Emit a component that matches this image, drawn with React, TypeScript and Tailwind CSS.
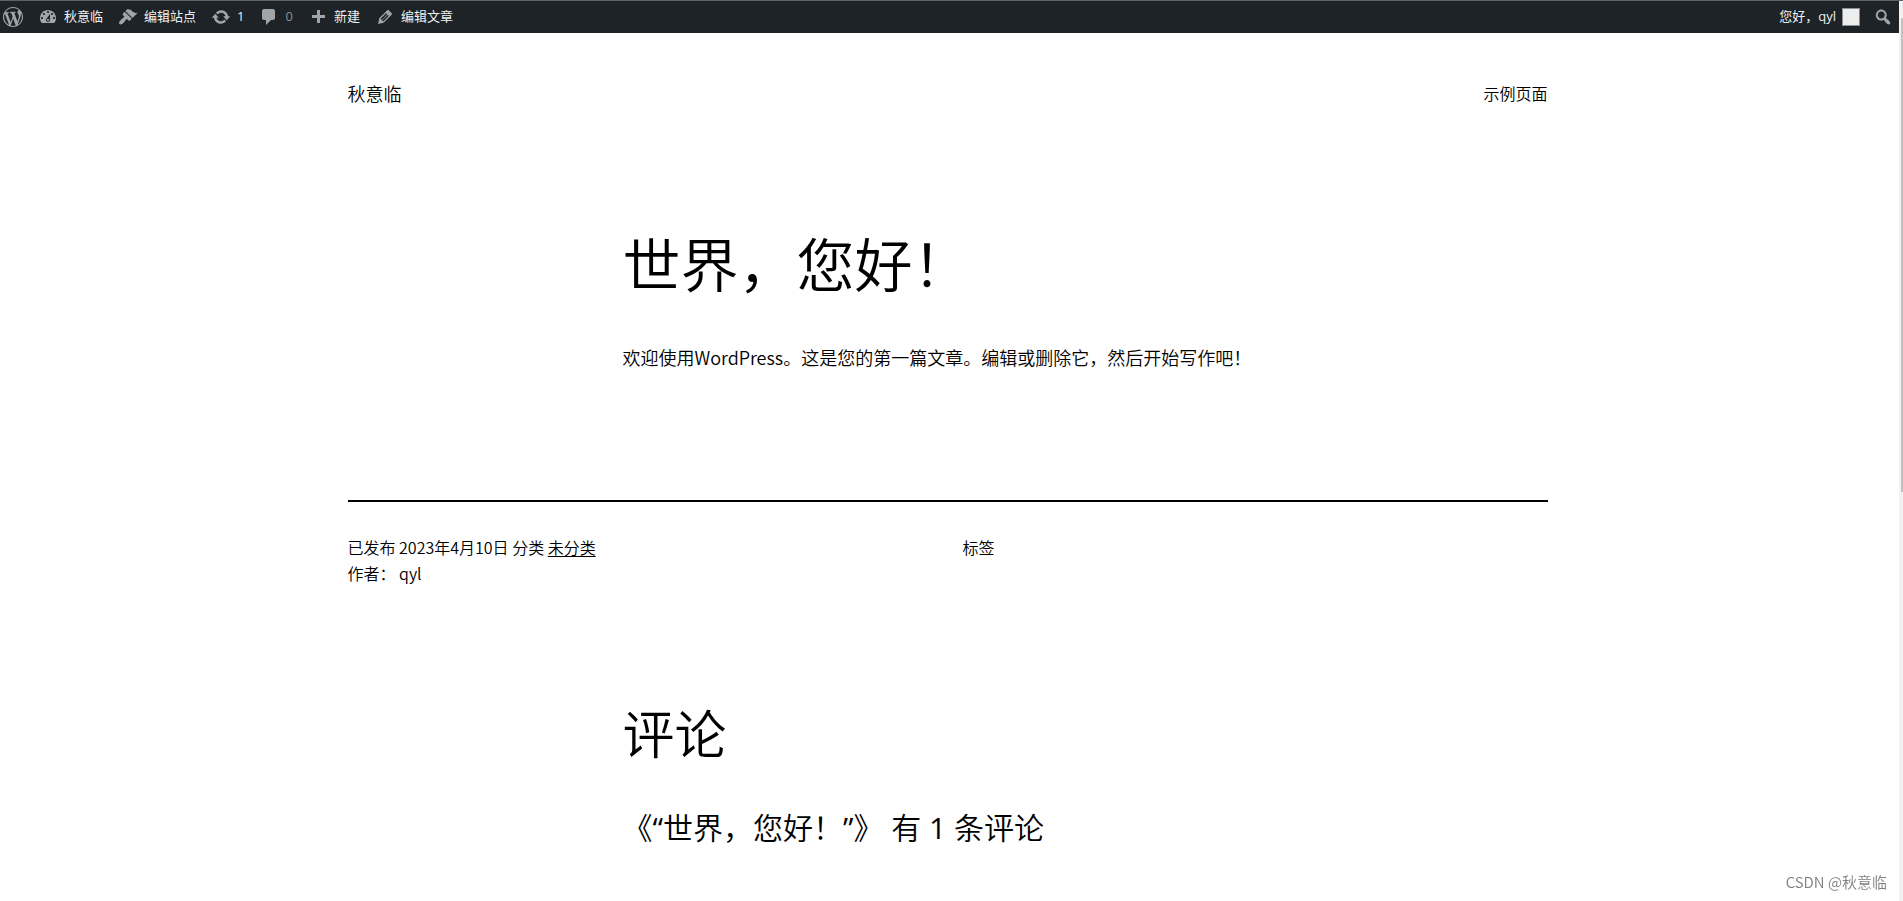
import React, { type ReactNode } from "react";
import clsx from "clsx";

const icons = {
  wordpress:
    "M20 10c0-5.51-4.49-10-10-10C4.48 0 0 4.49 0 10c0 5.52 4.48 10 10 10 5.51 0 10-4.48 10-10zM7.78 15.37L4.37 6.22c.55-.02 1.17-.08 1.17-.08.5-.06.44-1.13-.06-1.11 0 0-1.45.11-2.37.11-.18 0-.37 0-.58-.01C4.12 2.69 6.87 1.11 10 1.11c2.33 0 4.45.87 6.05 2.34-.68-.11-1.65.39-1.65 1.58 0 .74.45 1.36.9 2.1.35.61.55 1.36.55 2.46 0 1.49-1.4 5-1.4 5l-3.03-8.37c.54-.02.82-.17.82-.17.5-.05.44-1.25-.06-1.22 0 0-1.44.12-2.38.12-.87 0-2.33-.12-2.33-.12-.5-.03-.56 1.2-.06 1.22l.92.08 1.26 3.41zM17.41 10c.24-.64.74-1.87.43-4.25.7 1.29 1.05 2.71 1.05 4.25 0 3.29-1.73 6.24-4.4 7.78.97-2.59 1.94-5.2 2.92-7.78zM6.1 18.09C3.12 16.65 1.11 13.53 1.11 10c0-1.3.23-2.48.72-3.59C3.25 10.3 4.67 14.2 6.1 18.09zm4.03-6.63l2.58 6.98c-.86.29-1.76.45-2.71.45-.79 0-1.57-.11-2.29-.33.81-2.38 1.62-4.74 2.42-7.1z",
  dashboard:
    "M3.76 16h12.48c1.1-1.37 1.76-3.11 1.76-5 0-4.42-3.58-8-8-8s-8 3.58-8 8c0 1.89.66 3.63 1.76 5zM10 4c.55 0 1 .45 1 1s-.45 1-1 1-1-.45-1-1 .45-1 1-1zM6 6c.55 0 1 .45 1 1s-.45 1-1 1-1-.45-1-1 .45-1 1-1zm8 0c.55 0 1 .45 1 1s-.45 1-1 1-1-.45-1-1 .45-1 1-1zm-5.37 5.55L12 7v6c0 1.1-.9 2-2 2s-2-.9-2-2c0-.57.24-1.08.63-1.45zM4 10c.55 0 1 .45 1 1s-.45 1-1 1-1-.45-1-1 .45-1 1-1zm12 0c.55 0 1 .45 1 1s-.45 1-1 1-1-.45-1-1 .45-1 1-1zm-5 3c0-.55-.45-1-1-1s-1 .45-1 1 .45 1 1 1 1-.45 1-1z",
  brush:
    "M14.48 11.06L7.41 3.99l1.5-1.5c.5-.56 2.3-.47 3.51.32 1.21.8 1.43 1.28 2.91 2.1 1.18.64 2.45 1.26 4.45.85zm-.71.71L6.7 4.7 4.93 6.47c-.39.39-.39 1.02 0 1.41l1.06 1.06c.39.39.39 1.03 0 1.42-.6.6-1.43 1.11-2.21 1.69-.35.26-.7.53-1.01.84C1.43 14.23.4 16.08 1.4 17.07c.99 1 2.84-.03 4.18-1.36.31-.31.58-.66.85-1.02.57-.78 1.08-1.61 1.69-2.21.39-.39 1.02-.39 1.41 0l1.06 1.06c.39.39 1.02.39 1.41 0z",
  update:
    "M10.2 3.28c3.53 0 6.43 2.61 6.92 6h2.08l-3.5 4-3.5-4h2.32c-.45-1.97-2.21-3.45-4.32-3.45-1.45 0-2.73.71-3.54 1.78L4.95 5.66C6.23 4.2 8.11 3.28 10.2 3.28zm-.4 13.44c-3.52 0-6.43-2.61-6.92-6H.8l3.5-4c1.17 1.33 2.33 2.67 3.5 4H5.48c.45 1.97 2.21 3.45 4.32 3.45 1.45 0 2.73-.71 3.54-1.78l1.71 1.95c-1.28 1.46-3.15 2.38-5.25 2.38z",
  comment:
    "M5 2h9c1.1 0 2 .9 2 2v7c0 1.1-.9 2-2 2h-2l-5 5v-5H5c-1.1 0-2-.9-2-2V4c0-1.1.9-2 2-2z",
  plus: "M17 8v3h-5v5H9v-5H4V8h5V3h3v5h5z",
  edit: "M13.89 3.39l2.71 2.72c.46.46.42 1.24.03 1.64l-8.01 8.02-5.56 1.16 1.16-5.58s7.6-7.63 7.99-8.03c.39-.39 1.22-.39 1.68.07zm-2.73 2.79l-5.59 5.61 1.11 1.11 5.54-5.65zm-2.97 8.23l5.58-5.6-1.07-1.08-5.59 5.6z",
  search:
    "M12.14 4.18c1.87 1.87 2.11 4.75.72 6.89.12.1.22.21.36.31.2.16.47.36.81.59.34.24.56.39.66.47.42.31.73.57.94.78.32.32.6.65.84 1 .25.35.44.69.59 1.04.14.35.21.68.18 1-.02.32-.14.59-.36.81s-.49.34-.81.36c-.31.02-.65-.04-.99-.19-.35-.14-.7-.34-1.04-.59-.35-.24-.68-.52-1-.84-.21-.21-.47-.52-.77-.93-.1-.13-.25-.35-.47-.66-.22-.32-.4-.57-.56-.78-.16-.2-.29-.35-.44-.5-2.07 1.09-4.69.76-6.44-.98-2.14-2.15-2.14-5.64 0-7.78 2.15-2.15 5.63-2.15 7.78 0zm-1.41 6.36c1.36-1.37 1.36-3.58 0-4.95-1.37-1.37-3.59-1.37-4.95 0-1.37 1.37-1.37 3.58 0 4.95 1.36 1.37 3.58 1.37 4.95 0z",
};

type IconName = keyof typeof icons;

const Icon: React.FC<{ name: IconName }> = ({ name }) => (
  <svg
    viewBox="0 0 20 20"
    className="size-5 shrink-0 fill-[#a0a5aa]"
    aria-hidden="true"
  >
    <path d={icons[name]} />
  </svg>
);

type BarLinkProps = {
  icon: IconName;
  muted?: boolean;
  children?: ReactNode;
};

const BarLink: React.FC<BarLinkProps> = ({ icon, muted, children }) => (
  <a
    href="#"
    className={clsx(
      "flex items-center gap-1.5",
      muted ? "text-[#8c8f94]" : "text-[#f0f0f1]"
    )}
  >
    <Icon name={icon} />
    {children && <span>{children}</span>}
  </a>
);

const AdminBar: React.FC = () => (
  <nav
    aria-label="工具栏"
    className="flex h-[33px] items-center justify-between border-t border-[#5f6164] bg-[#1d2327] pl-[3px] pr-2.5 font-['Open_Sans','Noto_Sans_CJK_SC',sans-serif] text-[13px] font-normal"
  >
    <div className="flex items-center gap-[15px]">
      <a href="#" aria-label="WordPress">
        <Icon name="wordpress" />
      </a>
      <BarLink icon="dashboard">秋意临</BarLink>
      <BarLink icon="brush">编辑站点</BarLink>
      <BarLink icon="update">1</BarLink>
      <BarLink icon="comment" muted>
        0
      </BarLink>
      <BarLink icon="plus">新建</BarLink>
      <BarLink icon="edit">编辑文章</BarLink>
    </div>
    <div className="flex items-center gap-[13px]">
      <a href="#" className="flex items-center gap-1.5 text-[#f0f0f1]">
        <span>您好，qyl</span>
        <span className="size-[18px] border border-[#8c8f94] bg-[#eeeeee]" />
      </a>
      <button type="button" aria-label="搜索">
        <Icon name="search" />
      </button>
    </div>
  </nav>
);

const PostMeta: React.FC = () => (
  <div className="grid grid-cols-2 gap-x-[30px] border-t-2 border-black pt-8 text-base leading-[26px]">
    <div>
      <p>
        已发布 <time dateTime="2023-04-10">2023年4月10日</time> 分类{" "}
        <a href="#" className="underline underline-offset-2">
          未分类
        </a>
      </p>
      <p>作者： qyl</p>
    </div>
    <p>标签</p>
  </div>
);

const App: React.FC = () => (
  <div
    lang="zh-CN"
    className="min-h-screen bg-white font-['Noto_Sans_CJK_SC',sans-serif] font-[350] text-black"
  >
    <AdminBar />

    <div className="mx-auto max-w-[1208px] pr-2">
      <header className="flex items-center justify-between pt-[46px]">
        <a href="#" className="text-lg leading-7">
          秋意临
        </a>
        <a href="#" className="text-base leading-7">
          示例页面
        </a>
      </header>

      <main>
        <article>
          <div className="mx-auto max-w-[650px] pt-[121px] pb-32">
            <h1 className="text-[58px] leading-[68px] font-[350]">
              世界，您好！
            </h1>
            <p className="pt-[47px] text-lg leading-[29px]">
              欢迎使用WordPress。这是您的第一篇文章。编辑或删除它，然后开始写作吧！
            </p>
          </div>
          <PostMeta />
        </article>

        <section className="mx-auto max-w-[650px] pt-[116px]">
          <h2 className="text-[52px] leading-[60px] font-[350]">评论</h2>
          <h3 className="pt-12 font-['Open_Sans','Noto_Sans_CJK_SC',sans-serif] text-[30px] leading-9 font-[350]">
            《<span className="font-normal">“</span>世界，您好！
            <span className="font-normal">”</span>》 有
            <span className="font-normal"> 1 </span>
            条评论
          </h3>
        </section>
      </main>
    </div>

    <div
      aria-hidden="true"
      className="fixed top-px right-0 bottom-0 w-1 bg-[#f1f1f1] pt-[17px] pl-0.5"
    >
      <div className="h-[474px] bg-[#c1c1c1]" />
    </div>
    <p className="fixed right-4 bottom-2 text-[15px] leading-[22px] text-[#808080]">
      CSDN @秋意临
    </p>
  </div>
);

export default App;
